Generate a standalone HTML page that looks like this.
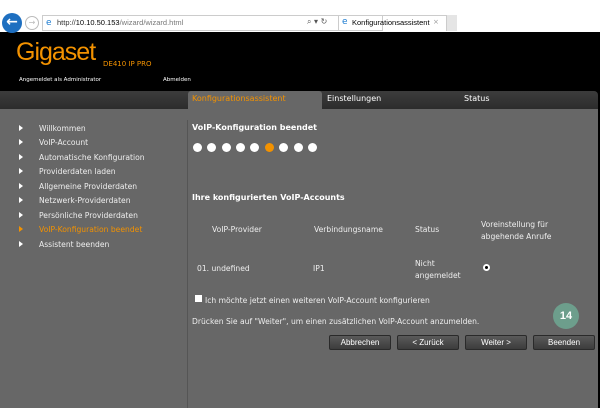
<!DOCTYPE html>
<html><head><style>
*{margin:0;padding:0;box-sizing:border-box}
body{width:600px;height:408px;overflow:hidden;background:#000;font-family:"DejaVu Sans","Liberation Sans",sans-serif;position:relative}
.a{position:absolute;white-space:nowrap}
.s{font-size:7.6px;color:#eee}
.menu div{position:absolute;left:39px;font-size:7.6px;color:#eee}
.menu b{position:absolute;left:-20px;top:1px;width:0;height:0;border-left:4px solid #fff;border-top:3px solid transparent;border-bottom:3px solid transparent}
.dot{position:absolute;top:143px;width:9px;height:9px;border-radius:50%;background:#fff}
.btn{position:absolute;top:335px;width:62px;height:15px;background:linear-gradient(#5a5a5a,#3c3c3c);border:1px solid #2a2a2a;border-radius:2px;color:#fff;font-size:8px;text-align:center;line-height:13px;font-family:"Liberation Sans",sans-serif}
</style></head><body>
<div class="a" style="left:0;top:0;width:600px;height:32px;background:#fff"></div>
<div class="a" style="left:2px;top:13px;width:20px;height:20px;border-radius:50%;background:#1e6fc0;color:#fff;font-size:14px;text-align:center;line-height:19px;font-weight:bold">&#8592;</div>
<div class="a" style="left:25px;top:16px;width:14px;height:14px;border-radius:50%;border:1px solid #bbb;color:#bbb;font-size:8px;text-align:center;line-height:12px">&#8594;</div>
<div class="a" style="left:42px;top:15px;width:341px;height:16px;border:1px solid #ccc"></div>
<div class="a" style="left:46px;top:18px;font-size:9px;color:#1a7ad0">e</div>
<div class="a" style="left:57px;top:18px;font-size:7.5px;color:#333;font-family:'Liberation Sans',sans-serif">http://<b style="color:#000;font-weight:normal">10.10.50.153</b><span style="color:#777">/wizard/wizard.html</span></div>
<div class="a" style="left:307px;top:17px;font-size:8px;color:#555">⌕ ▾ ↻</div>
<div class="a" style="left:338px;top:15px;width:109px;height:16px;border:1px solid #ccc;border-bottom:none"></div>
<div class="a" style="left:342px;top:17px;font-size:9px;color:#1a7ad0">e</div>
<div class="a" style="left:352px;top:18px;font-size:7.5px;color:#000;font-family:'Liberation Sans',sans-serif">Konfigurationsassistent</div>
<div class="a" style="left:433px;top:18px;font-size:7px;color:#999">×</div>
<div class="a" style="left:447px;top:15px;width:10px;height:16px;background:#e5e5e5"></div>
<div class="a" style="left:16px;top:38px;font-size:25px;color:#f39200;font-family:'Liberation Sans',sans-serif;letter-spacing:-1px">Gigaset</div>
<div class="a" style="left:103px;top:60px;font-size:7px;color:#f39200">DE410 IP PRO</div>
<div class="a" style="left:19px;top:77px;font-size:5.5px;color:#fff">Angemeldet als Administrator</div>
<div class="a" style="left:163px;top:77px;font-size:5.5px;color:#fff">Abmelden</div>
<div class="a" style="left:0;top:91px;width:598px;height:18px;background:linear-gradient(#3c3c3c,#2c2c2c);border-top-right-radius:4px"></div>
<div class="a" style="left:188px;top:91px;width:134px;height:18px;background:#676767;border-top-right-radius:3px;border-top-left-radius:3px"></div>
<div class="a" style="left:192px;top:94px;font-size:8px;color:#f39200">Konfigurationsassistent</div>
<div class="a" style="left:327px;top:94px;font-size:8px;color:#fff">Einstellungen</div>
<div class="a" style="left:464px;top:94px;font-size:8px;color:#fff">Status</div>
<div class="a" style="left:0;top:109px;width:598px;height:299px;background:#676767"></div>
<div class="a" style="left:187px;top:120px;width:1px;height:288px;background:#555"></div>
<div class="menu">
<div style="top:124px"><b></b>Willkommen</div>
<div style="top:138px"><b></b>VoIP-Account</div>
<div style="top:153px"><b></b>Automatische Konfiguration</div>
<div style="top:167px"><b></b>Providerdaten laden</div>
<div style="top:182px"><b></b>Allgemeine Providerdaten</div>
<div style="top:196px"><b></b>Netzwerk-Providerdaten</div>
<div style="top:211px"><b></b>Persönliche Providerdaten</div>
<div style="top:225px;color:#f39200"><b style="border-left-color:#f39200"></b>VoIP-Konfiguration beendet</div>
<div style="top:240px"><b></b>Assistent beenden</div>
</div>
<div class="a" style="left:192px;top:123px;font-size:8px;color:#fff;font-weight:bold">VoIP-Konfiguration beendet</div>
<div class="dot" style="left:193px"></div><div class="dot" style="left:207px"></div><div class="dot" style="left:222px"></div><div class="dot" style="left:236px"></div><div class="dot" style="left:250px"></div><div class="dot" style="left:265px;background:#f39200"></div><div class="dot" style="left:279px"></div><div class="dot" style="left:294px"></div><div class="dot" style="left:308px"></div>
<div class="a" style="left:192px;top:193px;font-size:8px;color:#fff;font-weight:bold">Ihre konfigurierten VoIP-Accounts</div>
<div class="a s" style="left:212px;top:225px">VoIP-Provider</div>
<div class="a s" style="left:314px;top:225px">Verbindungsname</div>
<div class="a s" style="left:415px;top:225px">Status</div>
<div class="a s" style="left:481px;top:219px;line-height:12px">Voreinstellung für<br>abgehende Anrufe</div>
<div class="a s" style="left:197px;top:264px">01. undefined</div>
<div class="a s" style="left:313px;top:264px">IP1</div>
<div class="a s" style="left:415px;top:258px;line-height:12px">Nicht<br>angemeldet</div>
<div class="a" style="left:483px;top:264px;width:7px;height:7px;border-radius:50%;background:#000;border:2px solid #fff"></div>
<div class="a" style="left:195px;top:295px;width:7px;height:7px;background:#fff"></div>
<div class="a s" style="left:205px;top:296px">Ich möchte jetzt einen weiteren VoIP-Account konfigurieren</div>
<div class="a s" style="left:192px;top:317px">Drücken Sie auf "Weiter", um einen zusätzlichen VoIP-Account anzumelden.</div>
<div class="a" style="left:553px;top:303px;width:26px;height:26px;border-radius:50%;background:#6d9e8c;color:#fff;font-size:11px;font-weight:bold;text-align:center;line-height:26px;font-family:'Liberation Sans',sans-serif">14</div>
<div class="btn" style="left:329px">Abbrechen</div>
<div class="btn" style="left:397px">&lt; Zurück</div>
<div class="btn" style="left:465px">Weiter &gt;</div>
<div class="btn" style="left:533px">Beenden</div>
</body></html>
